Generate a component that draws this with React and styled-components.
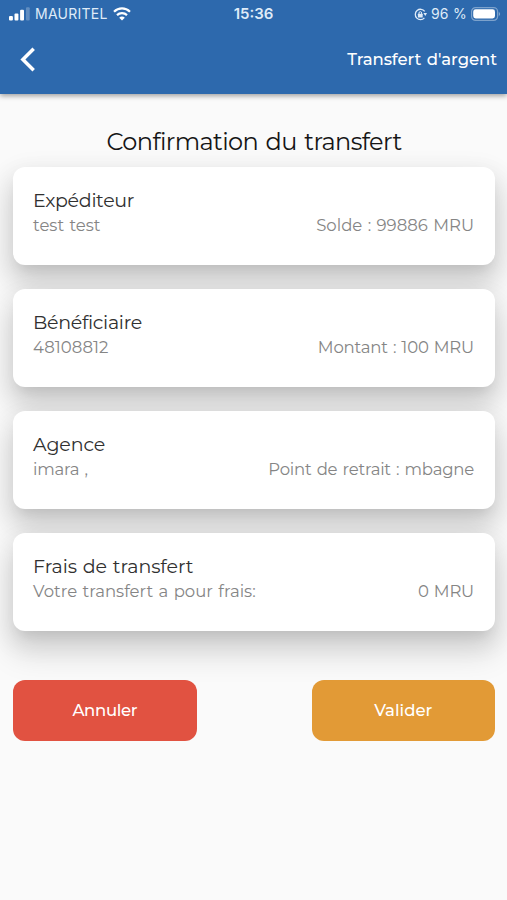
import React from 'react'
import styled, { createGlobalStyle } from 'styled-components'

const GlobalStyle = createGlobalStyle`
    * { box-sizing: border-box; }
    body {
        margin: 0;
        background: #fafafa;
        font-family: Montserrat, Inter, sans-serif;
    }
`
const Page = styled.div`
    display: flex;
    flex-direction: column;
    min-height: 900px;
    background: #fafafa;
`
const Header = styled.header`
    height: 94px;
    background: #2d69ad;
    color: #fff;
    box-shadow: 0 2px 5px rgba(0, 0, 0, 0.36);
    z-index: 1;
`
const StatusBar = styled.div`
    display: grid;
    grid-template-columns: 1fr auto 1fr;
    height: 27px;
    padding: 0 6px 0 9px;
    align-items: center;
    font: 400 14px/28px Inter, sans-serif;
    color: #dfebf8;
`
const StatusGroup = styled.div`
    display: flex;
    align-items: center;
    justify-content: ${p => p.$end ? 'flex-end' : 'flex-start'};
    gap: ${p => p.$gap};
`
const Carrier = styled.span`
    letter-spacing: 0.25px;
`
const Clock = styled.span`
    padding-right: 3px;
    font-size: 15px;
    font-weight: 600;
`
const NavBar = styled.div`
    display: flex;
    align-items: center;
    justify-content: space-between;
    height: 64px;
    padding: 0 10px 0 20px;
`
const BackButton = styled.button`
    display: flex;
    padding: 0;
    border: 0;
    background: none;
    color: #fff;
`
const NavTitle = styled.div`
    font-size: 16.5px;
    font-weight: 500;
    line-height: 20px;
    letter-spacing: -0.05px;
    word-spacing: 1px;
`
const Content = styled.main`
    padding: 32px 12px 0 13px;
`
const Heading = styled.h1`
    margin: 0 0 9px;
    font-size: 24px;
    font-weight: 400;
    line-height: 32px;
    letter-spacing: -0.6px;
    word-spacing: 1.8px;
    text-align: center;
    color: #151515;
`
const CardList = styled.div`
    display: flex;
    flex-direction: column;
    gap: 24px;
`
const Card = styled.section`
    height: 98px;
    padding: 21px 21px 0 20px;
    border-radius: 12px;
    background: #fff;
    box-shadow:
        0 9px 13px -6px rgba(0, 0, 0, 0.09),
        0 20px 31px 3px rgba(0, 0, 0, 0.13),
        0 8px 24px 5px rgba(0, 0, 0, 0.07);
`
const CardTitle = styled.h2`
    margin: 0;
    font-size: 19px;
    font-weight: 400;
    line-height: 25px;
    color: #303030;
`
const CardRow = styled.div`
    display: flex;
    justify-content: space-between;
    font-size: 16.5px;
    line-height: 24px;
    color: #858585;
`
const Value = styled.span`
    letter-spacing: ${p => p.$spacing || 0}px;
    word-spacing: 1px;
    white-space: pre;
`
const Actions = styled.div`
    display: flex;
    justify-content: space-between;
    margin-top: 49px;
`
const ActionButton = styled.button`
    width: 183.5px;
    height: 61px;
    padding: 0 0 1px;
    border: 0;
    border-radius: 12px;
    background: ${p => p.$color};
    color: #fff;
    font-family: inherit;
    font-size: 16.5px;
    font-weight: 500;
    letter-spacing: ${p => p.$spacing || 0}px;
`

const SignalIcon = () => (
    <svg width="21" height="14" viewBox="0 0 21 14" fill="#fff">
        <rect x="0" y="9" width="3.9" height="4.6" rx="1" />
        <rect x="5.5" y="6.6" width="3.9" height="7" rx="1" />
        <rect x="11.1" y="2.7" width="3.9" height="10.9" rx="1" />
        <rect x="17" y="0.2" width="3.7" height="13.4" rx="1" opacity="0.25" />
    </svg>
)

const WifiIcon = () => (
    <svg width="18" height="14" viewBox="0 0 18 14" fill="none" stroke="#fff" strokeWidth="2.2">
        <path d="M1 4.7C5.5 0.3 12.5 0.3 17 4.7" />
        <path d="M4 8.1C6.8 5.4 11.2 5.4 14 8.1" />
        <path d="M9 13.5L6.2 10.7C7.8 9.2 10.2 9.2 11.8 10.7Z" fill="#fff" stroke="none" />
    </svg>
)

const LockIcon = () => (
    <svg width="13" height="14" viewBox="0 -1 13 14" fill="none" stroke="#dfebf8" strokeWidth="1.3">
        <path d="M10.4 9.9A5.2 5.2 0 1 1 10.7 3.4" />
        <path d="M9.4 5H13L11.3 8Z" fill="#dfebf8" stroke="none" />
        <path d="M5 6.3V5a1.3 1.3 0 0 1 2.6 0V6.3" strokeWidth="1" />
        <rect x="3.9" y="5.8" width="4.8" height="3.6" rx="0.5" fill="#dfebf8" stroke="none" />
    </svg>
)

const BatteryIcon = () => (
    <svg width="30" height="14" viewBox="0 0 30 14">
        <rect x="0.6" y="0.6" width="26" height="12.8" rx="4" fill="none" stroke="#fff" strokeOpacity="0.38" strokeWidth="1.2" />
        <rect x="2.2" y="2.3" width="21.8" height="9.2" rx="2.4" fill="#fff" />
        <path d="M27.8 4.9C29.6 5.6 29.6 8.4 27.8 9.1Z" fill="#fff" opacity="0.4" />
    </svg>
)

const BackIcon = () => (
    <svg width="16" height="26" viewBox="0 0 16 26" fill="none" stroke="currentColor" strokeWidth="3.5">
        <path d="M13.7 2.8L2.9 13.5L13.7 24.2" />
    </svg>
)

const cards = [
    { title: 'Expéditeur', spacing: -0.28, left: ['test test', 0], right: ['Solde : 99886 MRU', 0.02] },
    { title: 'Bénéficiaire', spacing: -0.3, left: ['48108812', 0.08], right: ['Montant : 100 MRU', -0.18] },
    { title: 'Agence', spacing: -0.12, left: ['imara ,', -0.2], right: ['Point de retrait : mbagne', -0.2] },
    { title: 'Frais de transfert', spacing: -0.08, left: ['Votre transfert a pour frais:', 0.02], right: ['0 MRU', -0.2] },
]

export default function App() {
    return (
        <Page>
            <GlobalStyle />
            <Header>
                <StatusBar>
                    <StatusGroup $gap="5px">
                        <SignalIcon />
                        <Carrier>MAURITEL</Carrier>
                        <WifiIcon />
                    </StatusGroup>
                    <Clock>15:36</Clock>
                    <StatusGroup $end $gap="4px">
                        <LockIcon />
                        <Carrier>96 %</Carrier>
                        <BatteryIcon />
                    </StatusGroup>
                </StatusBar>
                <NavBar>
                    <BackButton aria-label="Retour"><BackIcon /></BackButton>
                    <NavTitle>Transfert d'argent</NavTitle>
                </NavBar>
            </Header>
            <Content>
                <Heading>Confirmation du transfert</Heading>
                <CardList>
                    {cards.map(card => (
                        <Card key={card.title}>
                            <CardTitle><Value $spacing={card.spacing}>{card.title}</Value></CardTitle>
                            <CardRow>
                                <Value $spacing={card.left[1]}>{card.left[0]}</Value>
                                <Value $spacing={card.right[1]}>{card.right[0]}</Value>
                            </CardRow>
                        </Card>
                    ))}
                </CardList>
                <Actions>
                    <ActionButton $color="#e15241" $spacing={-0.35}>Annuler</ActionButton>
                    <ActionButton $color="#e29a36">Valider</ActionButton>
                </Actions>
            </Content>
        </Page>
    )
}
